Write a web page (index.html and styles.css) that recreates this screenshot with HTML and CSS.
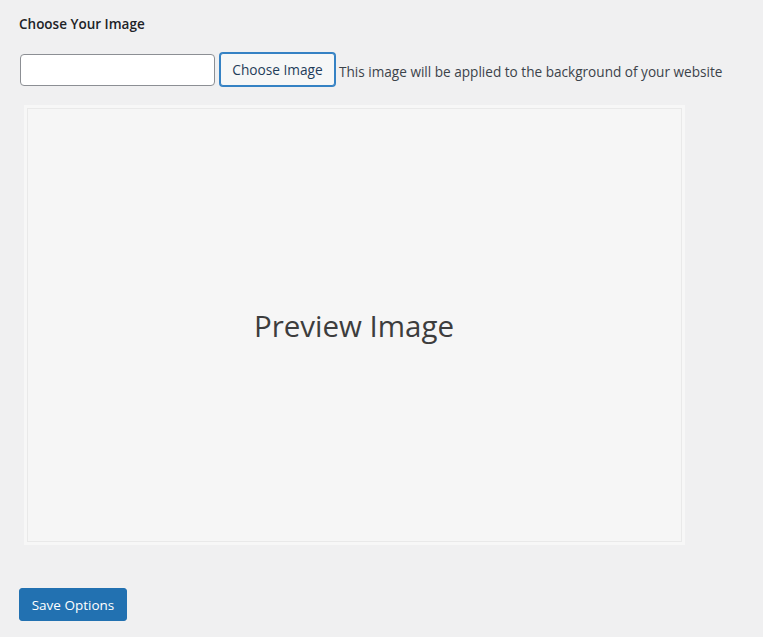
FILE: index.html
```html
<!DOCTYPE html>
<html>
<head>
<meta charset="utf-8">
<link rel="stylesheet" href="styles.css">
</head>
<body>
<div class="wrap">
  <h2 class="title">Choose Your Image</h2>
  <div class="row">
    <input class="text-input" type="text">
    <button class="btn-choose">Choose Image</button>
    <span class="desc">This image will be applied to the background of your website</span>
  </div>
  <div class="preview">
    <div class="preview-inner">
      <span class="preview-text">Preview Image</span>
    </div>
  </div>
  <button class="btn-save">Save Options</button>
</div>
</body>
</html>
```
FILE: styles.css
```css
html, body {
  margin: 0;
  padding: 0;
  background: #f0f0f1;
}
body {
  font-family: "Open Sans", "Noto Sans", sans-serif;
  color: #3c434a;
  font-size: 13px;
}
.wrap {
  padding: 14px 0 0 19px;
}
.title {
  margin: 0;
  font-size: 13.5px;
  font-weight: 600;
  color: #1d2327;
  line-height: 20px;
}
.row {
  display: flex;
  align-items: center;
  margin-top: 19px;
  margin-left: 1px;
}
.text-input {
  box-sizing: border-box;
  width: 195px;
  height: 32px;
  border: 1px solid #8c8f94;
  border-radius: 4px;
  background: #fff;
  margin: 0;
  padding: 0 8px;
}
.btn-choose {
  box-sizing: border-box;
  margin: 0 0 0 5px;
  width: 115px;
  height: 33px;
  border: 1px solid #3582c4;
  box-shadow: 0 0 0 1px #3582c4;
  border-radius: 3px;
  background: #f6f7f7;
  color: #1f3d5a;
  font-family: inherit;
  font-size: 13.7px;
  padding: 0;
}
.desc {
  margin-left: 4px;
  margin-top: 4px;
  color: #3c434a;
  font-size: 13.6px;
}
.preview {
  box-sizing: border-box;
  width: 661px;
  height: 440px;
  margin: 19px 0 0 5px;
  border: 3px solid #f7f7f7;
  background: #f7f7f7;
}
.preview-inner {
  box-sizing: border-box;
  height: 100%;
  border: 1px solid #e9e9e9;
  background: #f6f6f6;
  display: flex;
  align-items: center;
  justify-content: center;
}
.preview-text {
  font-family: "Open Sans", sans-serif;
  font-size: 29.5px;
  color: #3d3d3d;
  margin-top: 0px;
  margin-left: -1px;
}
.btn-save {
  display: block;
  box-sizing: border-box;
  margin-top: 43px;
  width: 108px;
  height: 33px;
  border: 1px solid #2271b1;
  border-radius: 3px;
  background: #2271b1;
  color: #fff;
  font-family: inherit;
  font-size: 13.5px;
  padding: 0;
}
```
